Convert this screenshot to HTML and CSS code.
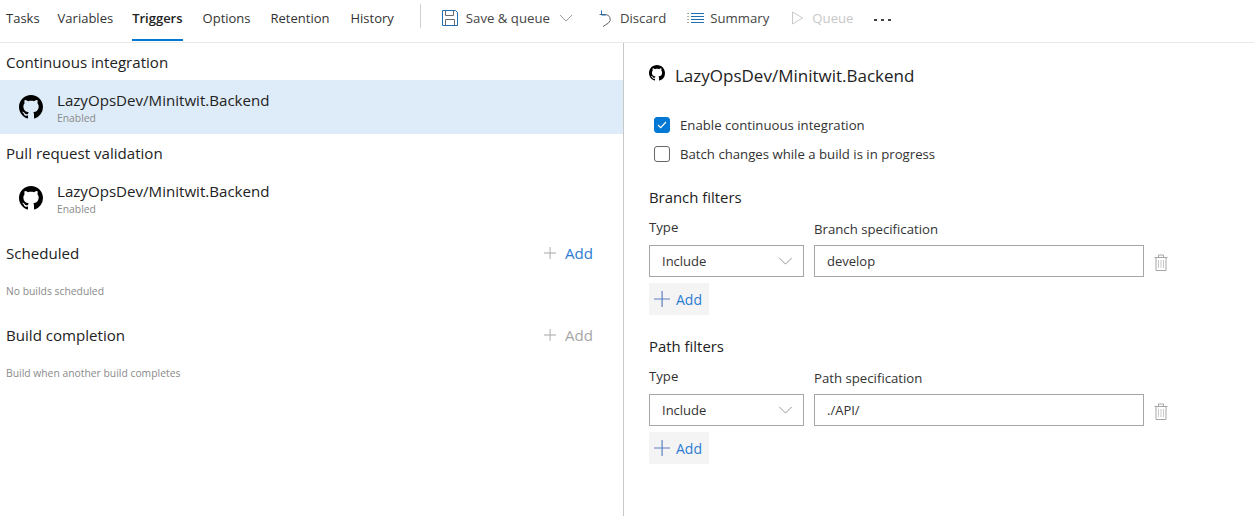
FILE: index.html
```html
<!doctype html>
<html lang="en">
    <head>
        <meta charset="UTF-8" />
        <title>Triggers</title>
        <link rel="stylesheet" href="styles.css">
    </head>
    <body>
        <svg class="defs" width="0" height="0">
            <symbol id="github" viewBox="0 0 16 16">
                <path fill="#000" d="M8 0C3.58 0 0 3.58 0 8c0 3.54 2.29 6.53 5.47 7.59.4.07.55-.17.55-.38 0-.19-.01-.82-.01-1.49-2.01.37-2.53-.49-2.69-.94-.09-.23-.48-.94-.82-1.13-.28-.15-.68-.52-.01-.53.63-.01 1.08.58 1.23.82.72 1.21 1.87.87 2.33.66.07-.52.28-.87.51-1.07-1.78-.2-3.64-.89-3.64-3.95 0-.87.31-1.59.82-2.15-.08-.2-.36-1.02.08-2.12 0 0 .67-.21 2.2.82.64-.18 1.32-.27 2-.27s1.36.09 2 .27c1.53-1.04 2.2-.82 2.2-.82.44 1.1.16 1.92.08 2.12.51.56.82 1.27.82 2.15 0 3.07-1.87 3.75-3.65 3.95.29.25.54.73.54 1.48 0 1.07-.01 1.93-.01 2.2 0 .21.15.46.55.38A8.01 8.01 0 0 0 16 8c0-4.42-3.58-8-8-8z"/>
            </symbol>
            <symbol id="plus" viewBox="0 0 16 16">
                <path d="M7.500 0h1.200v7.400H16v1.200H8.700V16H7.500V8.600H0V7.400h7.500z"/>
            </symbol>
            <symbol id="chevron" viewBox="0 0 16 9">
                <path fill="none" stroke="currentColor" d="M1 1l7 7 7-7"/>
            </symbol>
            <symbol id="trash" viewBox="0 0 14 17">
                <path fill="none" stroke="#a6a6a6" d="M.5 3.500h13M2 3.500V16.500h10V3.500M4.500 3.500v-2.500h5v2.500"/>
                <path fill="none" stroke="#c8c8c8" d="M4.500 6v8M7 6v8M9.500 6v8"/>
            </symbol>
        </svg>

        <header class="toolbar">
            <nav class="tabs">
                <a class="tab">Tasks</a>
                <a class="tab">Variables</a>
                <a class="tab selected">Triggers</a>
                <a class="tab">Options</a>
                <a class="tab">Retention</a>
                <a class="tab">History</a>
            </nav>
            <div class="actions">
                <button class="action save">
                    <svg width="16" height="16" viewBox="0 0 16 16">
                        <path fill="none" stroke="#1f6fb5" d="M.5.5h13l2 2v13H.500z"/>
                        <path fill="none" stroke="#6a6a6a" d="M3.500.5v5h8v-5M3.500 15.500v-6h9v6"/>
                    </svg>
                    <span>Save &amp; queue</span>
                    <svg class="chev" width="14" height="8"><use href="#chevron"/></svg>
                </button>
                <button class="action discard">
                    <svg width="14" height="17" viewBox="0 0 14 17">
                        <path fill="none" stroke="#666" d="M1.500 4.500h6a4.800 4.800 0 0 1 3 8.500L5 16.500"/>
                        <path fill="none" stroke="#1f6fb5" d="M3.500 .5v4.500h4.500"/>
                    </svg>
                    <span>Discard</span>
                </button>
                <button class="action summary">
                    <svg width="17" height="13" viewBox="0 0 17 13">
                        <path stroke="#1f6fb5" d="M4 1.500h13M4 4.500h13M4 7.500h13M4 10.500h13"/>
                        <path stroke="#aaa" d="M0 1.500h2M0 4.500h2M0 7.500h2M0 10.500h2"/>
                    </svg>
                    <span>Summary</span>
                </button>
                <button class="action queue">
                    <svg width="11" height="14" viewBox="0 0 11 14">
                        <path fill="none" stroke="#c8c8c8" d="M.5 1v12l10-6z"/>
                    </svg>
                    <span>Queue</span>
                </button>
                <button class="action more">
                    <i></i><i></i><i></i>
                </button>
            </div>
        </header>

        <main class="split">
            <section class="left-pane">
                <h3 class="group-title first">Continuous integration</h3>
                <div class="repo-row selected">
                    <svg class="repo-icon" width="24" height="24"><use href="#github"/></svg>
                    <div>
                        <div class="repo-name">LazyOpsDev/Minitwit.Backend</div>
                        <div class="repo-status">Enabled</div>
                    </div>
                </div>
                <h3 class="group-title">Pull request validation</h3>
                <div class="repo-row">
                    <svg class="repo-icon" width="24" height="24"><use href="#github"/></svg>
                    <div>
                        <div class="repo-name">LazyOpsDev/Minitwit.Backend</div>
                        <div class="repo-status">Enabled</div>
                    </div>
                </div>
                <div class="group-head">
                    <h3 class="group-title">Scheduled</h3>
                    <button class="head-add">
                        <svg width="12" height="12"><use href="#plus"/></svg>
                        <span>Add</span>
                    </button>
                </div>
                <p class="hint">No builds scheduled</p>
                <div class="group-head">
                    <h3 class="group-title">Build completion</h3>
                    <button class="head-add off">
                        <svg width="12" height="12"><use href="#plus"/></svg>
                        <span>Add</span>
                    </button>
                </div>
                <p class="hint">Build when another build completes</p>
            </section>

            <section class="right-pane">
                <h2 class="detail-title">
                    <svg width="16" height="16"><use href="#github"/></svg>
                    <span>LazyOpsDev/Minitwit.Backend</span>
                </h2>
                <div class="checks">
                    <label class="check">
                        <span class="box on">
                            <svg width="10" height="8" viewBox="0 0 10 8"><path fill="none" stroke="#fff" stroke-width="1.200" d="M1 4l2.700 2.700L9 1"/></svg>
                        </span>
                        Enable continuous integration
                    </label>
                    <label class="check">
                        <span class="box"></span>
                        Batch changes while a build is in progress
                    </label>
                </div>

                <h3 class="filter-title">Branch filters</h3>
                <div class="filter-row">
                    <div class="field type-field">
                        <label class="field-label type-label">Type</label>
                        <div class="picker">
                            <span>Include</span>
                            <svg class="chev" width="15" height="8"><use href="#chevron"/></svg>
                        </div>
                    </div>
                    <div class="field spec-field">
                        <label class="field-label">Branch specification</label>
                        <div class="spec">develop</div>
                    </div>
                    <svg class="trash" width="14" height="17"><use href="#trash"/></svg>
                </div>
                <button class="add-btn">
                    <svg width="16" height="16"><use href="#plus"/></svg>
                    <span>Add</span>
                </button>

                <h3 class="filter-title">Path filters</h3>
                <div class="filter-row">
                    <div class="field type-field">
                        <label class="field-label type-label">Type</label>
                        <div class="picker">
                            <span>Include</span>
                            <svg class="chev" width="15" height="8"><use href="#chevron"/></svg>
                        </div>
                    </div>
                    <div class="field spec-field">
                        <label class="field-label">Path specification</label>
                        <div class="spec">./API/</div>
                    </div>
                    <svg class="trash" width="14" height="17"><use href="#trash"/></svg>
                </div>
                <button class="add-btn">
                    <svg width="16" height="16"><use href="#plus"/></svg>
                    <span>Add</span>
                </button>
            </section>
        </main>
    </body>
</html>
```

FILE: styles.css
```css
* {
    box-sizing: border-box;
}
html,
body {
    height: 516px;
    overflow: hidden;
}
body {
    margin: 0;
    font-family: "Open Sans", "Noto Sans", sans-serif;
    font-size: 13.2px;
    color: #333333;
    background-color: #ffffff;
}
h2,
h3,
p {
    margin: 0;
    font-weight: normal;
}
button {
    font: inherit;
    color: inherit;
    background: none;
    border: none;
    padding: 0;
    display: flex;
    align-items: center;
}
.defs {
    position: absolute;
}

.toolbar {
    display: flex;
    height: 43px;
    border-bottom: 1px solid #eaeaea;
}
.tabs {
    display: flex;
    gap: 20px;
    padding-left: 6px;
    font-size: 13px;
}
.tab {
    height: 41px;
    line-height: 37px;
    color: #333333;
}
.tab:first-child {
    margin-right: -2px;
}
.tab.selected {
    margin-left: -1px;
    font-weight: 600;
    color: #222222;
    border-bottom: 2px solid #0078d4;
}
.tab:last-child {
    margin-left: 1px;
}
.actions {
    display: flex;
    align-items: center;
    height: 36px;
    margin-left: 48px;
    color: #444444;
}
.action {
    gap: 8px;
}
.save {
    position: relative;
}
.save::before {
    content: "";
    position: absolute;
    left: -22px;
    top: -5px;
    height: 24px;
    border-left: 1px solid #d0d0d0;
}
.save .chev {
    color: #8a8a8a;
    margin-left: 1px;
}
.discard {
    margin-left: 25px;
    gap: 8px;
}
.summary {
    margin-left: 21px;
    gap: 6px;
}
.queue {
    margin-left: 23px;
    gap: 9px;
    color: #c8c8c8;
}
.more {
    margin-left: 20px;
    gap: 4px;
    margin-top: 3px;
}
.more i {
    width: 3px;
    height: 2px;
    background-color: #444444;
}

.split {
    display: flex;
    height: 473px;
}
.left-pane {
    width: 624px;
    border-right: 1px solid #c8c8c8;
}
.group-title {
    font-size: 15.1px;
    color: #222222;
    padding-left: 6px;
    height: 37px;
    line-height: 39px;
}
.repo-row {
    display: flex;
    align-items: center;
    height: 54px;
    padding-left: 19px;
    gap: 14px;
}
.repo-row.selected {
    background-color: #deecf9;
}
.repo-name {
    font-size: 15.1px;
    line-height: 20px;
    padding-bottom: 1px;
    color: #222222;
}
.repo-status {
    font-size: 10.35px;
    line-height: 14px;
    color: #8a8a8a;
}
.group-head {
    display: flex;
    justify-content: space-between;
    align-items: center;
    margin-top: 9px;
}
.head-add {
    gap: 9px;
    margin-right: 30px;
    font-size: 15.1px;
    color: #2b7cd3;
}
.head-add svg {
    fill: #a6a6a6;
}
.head-add.off {
    color: #a6a6a6;
}
.hint {
    font-size: 10.35px;
    line-height: 14px;
    color: #8a8a8a;
    padding-left: 6px;
    margin-top: 13px;
    margin-bottom: 18px;
}

.right-pane {
    flex: 1;
    padding-left: 25px;
}
.detail-title {
    display: flex;
    gap: 10px;
    align-items: center;
    font-size: 17px;
    color: #222222;
    height: 24px;
    margin-top: 20px;
}
.detail-title svg {
    margin-top: -5px;
}
.checks {
    margin-top: 23px;
    padding-left: 5px;
}
.check {
    display: flex;
    align-items: center;
    gap: 10px;
    height: 29px;
}
.box {
    width: 16px;
    height: 16px;
    border: 1px solid #666666;
    border-radius: 3px;
    display: flex;
    align-items: center;
    justify-content: center;
}
.box.on {
    background-color: #0078d4;
    border-color: #0078d4;
}
.filter-title {
    font-size: 14.9px;
    color: #222222;
    line-height: 20px;
    margin-top: 19px;
}
.filter-row {
    display: flex;
    align-items: flex-end;
    margin-top: 11px;
}
.field-label {
    display: block;
    line-height: 18px;
    margin-bottom: 7px;
}
.type-label {
    margin-bottom: 9px;
}
.type-field {
    width: 155px;
    margin-right: 10px;
}
.spec-field {
    width: 330px;
}
.picker,
.spec {
    height: 32px;
    border: 1px solid #a6a6a6;
    display: flex;
    align-items: center;
    padding-left: 12px;
    font-size: 13px;
}
.picker {
    justify-content: space-between;
    padding-right: 10px;
}
.picker .chev {
    color: #8a8a8a;
}
.trash {
    margin-left: 10px;
    margin-bottom: 6px;
}
.add-btn {
    width: 60px;
    height: 32px;
    margin-top: 6px;
    padding-left: 5px;
    gap: 6px;
    background-color: #f4f4f4;
    color: #2b7cd3;
    font-size: 14px;
}
.add-btn svg {
    fill: #5c7fc0;
}
.add-btn + .filter-title {
    margin-top: 21px;
}
```
